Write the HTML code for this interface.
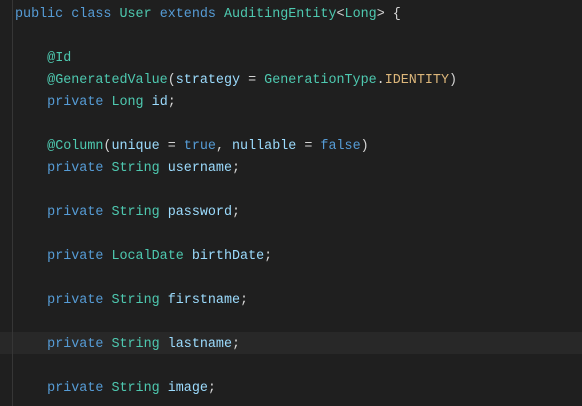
<!DOCTYPE html>
<html><head><style>
html,body{margin:0;padding:0;}
body{width:582px;height:406px;background:#1f1f1f;overflow:hidden;position:relative;font-family:"Liberation Mono",monospace;font-size:13.4px;}
.gut{position:absolute;left:12px;top:0;width:1px;height:406px;background:#363636;}
.hl{position:absolute;left:0;top:332px;width:582px;height:22px;background:#282828;}
.l{position:absolute;left:15px;height:22px;line-height:22px;white-space:pre;color:#d4d4d4;margin-top:1px;}
.k{color:#569cd6}.t{color:#4ec9b0}.v{color:#9cdcfe}.a{color:#4ec9b0}.c{color:#dcb67a}.b{color:#d4d4d4}
</style></head><body>
<div class="hl"></div>
<div class="gut"></div>
<div class="l" style="top:3px"><span class="k">public class</span> <span class="t">User</span> <span class="k">extends</span> <span class="t">AuditingEntity</span>&lt;<span class="t">Long</span>&gt; <span class="b">{</span></div>
<div class="l" style="top:47px">    <span class="a">@Id</span></div>
<div class="l" style="top:69px">    <span class="a">@GeneratedValue</span>(<span class="v">strategy</span> = <span class="t">GenerationType</span>.<span class="c">IDENTITY</span>)</div>
<div class="l" style="top:91px">    <span class="k">private</span> <span class="t">Long</span> <span class="v">id</span>;</div>
<div class="l" style="top:135px">    <span class="a">@Column</span>(<span class="v">unique</span> = <span class="k">true</span>, <span class="v">nullable</span> = <span class="k">false</span>)</div>
<div class="l" style="top:157px">    <span class="k">private</span> <span class="t">String</span> <span class="v">username</span>;</div>
<div class="l" style="top:201px">    <span class="k">private</span> <span class="t">String</span> <span class="v">password</span>;</div>
<div class="l" style="top:245px">    <span class="k">private</span> <span class="t">LocalDate</span> <span class="v">birthDate</span>;</div>
<div class="l" style="top:289px">    <span class="k">private</span> <span class="t">String</span> <span class="v">firstname</span>;</div>
<div class="l" style="top:333px">    <span class="k">private</span> <span class="t">String</span> <span class="v">lastname</span>;</div>
<div class="l" style="top:377px">    <span class="k">private</span> <span class="t">String</span> <span class="v">image</span>;</div>
</body></html>
